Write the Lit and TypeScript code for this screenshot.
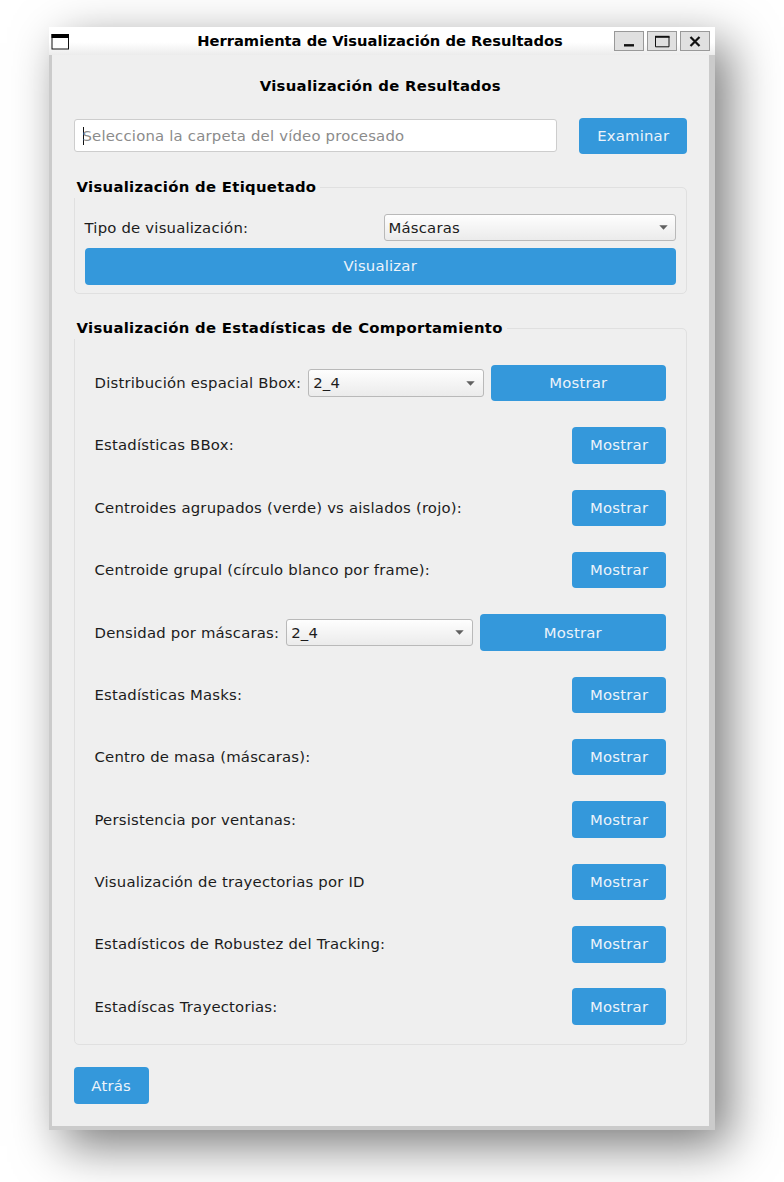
import { LitElement, html, css, nothing } from "lit";
import { customElement, property } from "lit/decorators.js";

@customElement("combo-box")
class ComboBox extends LitElement {
  @property() value = "";

  static styles = css`
    :host {
      display: flex;
      box-sizing: border-box;
      height: 27.4px;
      align-items: center;
      justify-content: space-between;
      padding: 0 7.5px 0 4px;
      border: 1px solid #b9b9b9;
      border-radius: 3px;
      background: linear-gradient(#fefefe, #ebebeb);
    }
    svg {
      display: block;
    }
  `;

  render() {
    return html`<span>${this.value}</span
      ><svg width="9" height="5" viewBox="0 0 9 5"><path d="M0.3 0.2H8.7L4.5 4.7Z" fill="#606060" /></svg>`;
  }
}

@customElement("app-root")
class AppRoot extends LitElement {
  static rows: { label: string; combo?: string }[] = [
    { label: "Distribución espacial Bbox:", combo: "2_4" },
    { label: "Estadísticas BBox:" },
    { label: "Centroides agrupados (verde) vs aislados (rojo):" },
    { label: "Centroide grupal (círculo blanco por frame):" },
    { label: "Densidad por máscaras:", combo: "2_4" },
    { label: "Estadísticas Masks:" },
    { label: "Centro de masa (máscaras):" },
    { label: "Persistencia por ventanas:" },
    { label: "Visualización de trayectorias por ID" },
    { label: "Estadísticos de Robustez del Tracking:" },
    { label: "Estadíscas Trayectorias:" },
  ];

  static styles = css`
    :host {
      display: block;
      box-sizing: border-box;
      width: 784px;
      height: 1182px;
      padding: 27px 0 0 48.5px;
      overflow: hidden;
      background: #fff;
      color: #1c1c1c;
      font: 14.85px/18px "DejaVu Sans", sans-serif;
      letter-spacing: 0.2px;
      white-space: nowrap;
    }
    .window {
      display: flex;
      flex-direction: column;
      width: 666px;
      height: 1103px;
      background: #cbcbcb;
      box-shadow: 14px 16px 46px rgba(0, 0, 0, 0.52);
    }
    .titlebar {
      display: flex;
      align-items: center;
      box-sizing: border-box;
      height: 28px;
      flex: none;
      padding: 0 5px 0 2px;
      background: linear-gradient(#fff 55%, #ececec);
    }
    .titlebar svg {
      display: block;
    }
    .title {
      flex: 1;
      padding-left: 77px;
      text-align: center;
      color: #000;
      font: bold 14.7px/18px "DejaVu Sans", sans-serif;
      letter-spacing: 0;
    }
    .controls {
      display: flex;
      gap: 3px;
    }
    .control {
      box-sizing: border-box;
      width: 30px;
      height: 20px;
      border: 1px solid #999;
      background: #e0e0e0;
    }
    .client {
      display: flex;
      flex-direction: column;
      box-sizing: border-box;
      height: 1070.5px;
      margin: 0 5.5px 0 3px;
      padding: 22px 22px 21px;
      background: #efefef;
    }
    h1,
    h2 {
      margin: 0;
      color: #000;
      font-size: 14.85px;
      font-weight: bold;
      letter-spacing: 0.3px;
      line-height: 18px;
    }
    h1 {
      text-align: center;
    }
    .browse {
      display: flex;
      align-items: center;
      gap: 22px;
      margin-top: 22.5px;
    }
    .field {
      display: flex;
      align-items: center;
      box-sizing: border-box;
      flex: 1;
      height: 33px;
      padding-left: 8px;
      border: 1px solid #cdcdcd;
      border-radius: 3px;
      background: #fff;
      color: #8b8b8b;
    }
    .caret {
      width: 1px;
      height: 18px;
      margin-right: -1px;
      background: #111;
    }
    .btn {
      box-sizing: border-box;
      height: 36.4px;
      padding: 0 17.8px;
      border: 0;
      border-radius: 4px;
      background: #3498db;
      color: #ecf3fa;
      font: inherit;
      letter-spacing: inherit;
      line-height: 36px;
      text-align: center;
    }
    .group {
      display: flex;
      flex-direction: column;
      box-sizing: border-box;
      border: 1px solid #e0e0e0;
      border-radius: 5px;
    }
    .group h2 {
      align-self: flex-start;
      height: 20px;
      padding: 0 4px;
      background: #efefef;
    }
    .tagging {
      height: 107.5px;
      margin-top: 33px;
      padding: 0 10px;
    }
    .tagging h2 {
      margin: -10px 0 0 -12px;
    }
    .type {
      display: grid;
      grid-template-columns: 299px 1fr;
      align-items: center;
      margin: 16px 0 7px;
    }
    .stats {
      height: 717.5px;
      margin-top: 33.5px;
      padding: 0 20px;
    }
    .stats h2 {
      margin: -10px 0 0 -22px;
    }
    .rows {
      display: flex;
      flex-direction: column;
      gap: 25.97px;
      margin-top: 26px;
    }
    .row {
      display: flex;
      align-items: center;
      justify-content: space-between;
    }
    .row.wide {
      display: grid;
      grid-template-columns: auto minmax(0, 1fr) minmax(0, 1fr);
      gap: 7px;
    }
    .back {
      align-self: flex-start;
      margin-top: 22px;
    }
  `;

  render() {
    return html`
      <div class="window">
        <div class="titlebar">
          <svg width="19" height="17" viewBox="0 0 19 17">
            <rect x="1" y="1.5" width="16.5" height="14.5" fill="#fff" stroke="#111" />
            <path d="M0.5 1H18V5H0.5Z" fill="#000" />
          </svg>
          <div class="title">Herramienta de Visualización de Resultados</div>
          <div class="controls">
            <div class="control">
              <svg width="28" height="18"><path d="M9 13.3H19" stroke="#111" stroke-width="2.4" /></svg>
            </div>
            <div class="control">
              <svg width="28" height="18">
                <path d="M7.5 4.5H21V14.8H7.5Z" fill="none" stroke="#111" />
                <path d="M7 4.8H21.5" stroke="#111" stroke-width="2" />
              </svg>
            </div>
            <div class="control">
              <svg width="28" height="18">
                <path d="M9.5 5L18.5 14M18.5 5L9.5 14" stroke="#111" stroke-width="2.2" />
              </svg>
            </div>
          </div>
        </div>
        <div class="client">
          <h1>Visualización de Resultados</h1>
          <div class="browse">
            <div class="field"><span class="caret"></span>Selecciona la carpeta del vídeo procesado</div>
            <button class="btn">Examinar</button>
          </div>
          <div class="group tagging">
            <h2>Visualización de Etiquetado</h2>
            <div class="type">
              <span>Tipo de visualización:</span>
              <combo-box value="Máscaras"></combo-box>
            </div>
            <button class="btn">Visualizar</button>
          </div>
          <div class="group stats">
            <h2>Visualización de Estadísticas de Comportamiento</h2>
            <div class="rows">
              ${AppRoot.rows.map(
                (r) => html`<div class="row ${r.combo ? "wide" : ""}">
                  <span>${r.label}</span>
                  ${r.combo ? html`<combo-box .value=${r.combo}></combo-box>` : nothing}
                  <button class="btn">Mostrar</button>
                </div>`
              )}
            </div>
          </div>
          <button class="btn back">Atrás</button>
        </div>
      </div>
    `;
  }
}
